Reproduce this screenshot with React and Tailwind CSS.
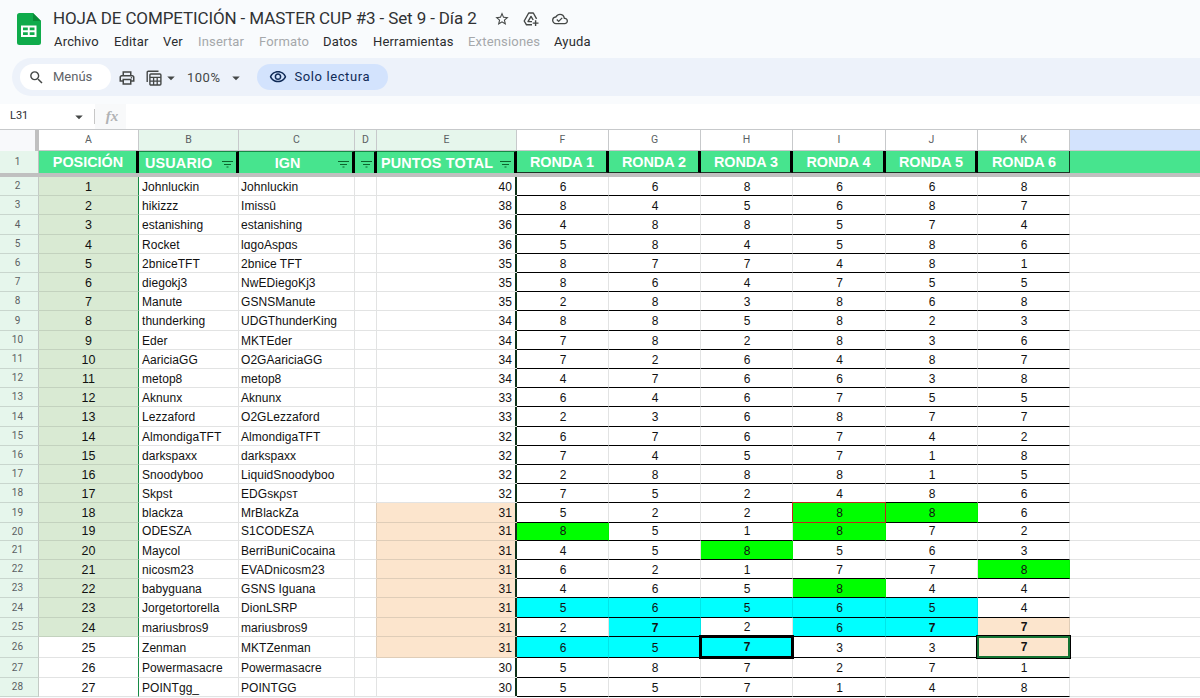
import {
  MdArrowDropDown,
  MdOutlineCloudDone,
  MdOutlinePrint,
  MdOutlineVisibility,
  MdSearch,
  MdStarBorder,
} from "react-icons/md";
import clsx from "clsx";

const MENUS = [
  { label: "Archivo", width: "w-[60px]" },
  { label: "Editar", width: "w-[49px]" },
  { label: "Ver", width: "w-[35px]" },
  { label: "Insertar", width: "w-[61px]", disabled: true },
  { label: "Formato", width: "w-[64px]", disabled: true },
  { label: "Datos", width: "w-[50px]" },
  { label: "Herramientas", width: "w-[95px]" },
  { label: "Extensiones", width: "w-[86px]", disabled: true },
  { label: "Ayuda", width: "w-[60px]" },
];

const COLUMNS = [
  { id: "A", title: "POSICIÓN" },
  { id: "B", title: "USUARIO", filter: true },
  { id: "C", title: "IGN", filter: true },
  { id: "D", title: "", filter: true },
  { id: "E", title: "PUNTOS TOTAL", filter: true },
  { id: "F", title: "RONDA 1" },
  { id: "G", title: "RONDA 2" },
  { id: "H", title: "RONDA 3" },
  { id: "I", title: "RONDA 4" },
  { id: "J", title: "RONDA 5" },
  { id: "K", title: "RONDA 6" },
];

const GRID =
  "grid grid-cols-[35px_4px_100px_100px_116px_22px_140px_92px_92px_92px_93px_92px_92px_130px]";

// usuario, ign, puntos, rondas, alto de la fila
const FILAS = [
  ["Johnluckin", "Johnluckin", 40, [6, 6, 8, 6, 6, 8], 19],
  ["hikizzz", "Imissû", 38, [8, 4, 5, 6, 8, 7], 19],
  ["estanishing", "estanishing", 36, [4, 8, 8, 5, 7, 4], 20],
  ["Rocket", "lɑgoAspɑs", 36, [5, 8, 4, 5, 8, 6], 19],
  ["2bniceTFT", "2bnice TFT", 35, [8, 7, 7, 4, 8, 1], 19],
  ["diegokj3", "NwEDiegoKj3", 35, [8, 6, 4, 7, 5, 5], 19],
  ["Manute", "GSNSManute", 35, [2, 8, 3, 8, 6, 8], 19],
  ["thunderking", "UDGThunderKing", 34, [8, 8, 5, 8, 2, 3], 20],
  ["Eder", "MKTEder", 34, [7, 8, 2, 8, 3, 6], 19],
  ["AariciaGG", "O2GAariciaGG", 34, [7, 2, 6, 4, 8, 7], 19],
  ["metop8", "metop8", 34, [4, 7, 6, 6, 3, 8], 19],
  ["Aknunx", "Aknunx", 33, [6, 4, 6, 7, 5, 5], 19],
  ["Lezzaford", "O2GLezzaford", 33, [2, 3, 6, 8, 7, 7], 20],
  ["AlmondigaTFT", "AlmondigaTFT", 32, [6, 7, 6, 7, 4, 2], 19],
  ["darkspaxx", "darkspaxx", 32, [7, 4, 5, 7, 1, 8], 19],
  ["Snoodyboo", "LiquidSnoodyboo", 32, [2, 8, 8, 8, 1, 5], 19],
  ["Skpst", "EDGsκρsт", 32, [7, 5, 2, 4, 8, 6], 19],
  ["blackza", "MrBlackZa", 31, [5, 2, 2, 8, 8, 6], 20],
  ["ODESZA", "S1CODESZA", 31, [8, 5, 1, 8, 7, 2], 18],
  ["Maycol", "BerriBuniCocaina", 31, [4, 5, 8, 5, 6, 3], 19],
  ["nicosm23", "EVADnicosm23", 31, [6, 2, 1, 7, 7, 8], 19],
  ["babyguana", "GSNS Iguana", 31, [4, 6, 5, 8, 4, 4], 19],
  ["Jorgetortorella", "DionLSRP", 31, [5, 6, 5, 6, 5, 4], 20],
  ["mariusbros9", "mariusbros9", 31, [2, 7, 2, 6, 7, 7], 19],
  ["Zenman", "MKTZenman", 31, [6, 5, 7, 3, 3, 7], 21],
  ["Powermasacre", "Powermasacre", 30, [5, 8, 7, 2, 7, 1], 20],
  ["POINTgg_", "POINTGG", 30, [5, 5, 7, 1, 4, 8], 19],
];

const VERDE = "bg-[#00ff00] border-r-[#00f000]";
const CIAN = "bg-[#00ffff] border-r-[#00e6e8]";
const CREMA = "bg-[#fce5cd] border-r-[#dfcdb8]";

// Celdas resaltadas, por columna y número de fila de la hoja
const COLORES = {
  I19: VERDE, J19: VERDE, F20: VERDE, I20: VERDE, H21: VERDE, K22: VERDE, I23: VERDE,
  F24: CIAN, G24: CIAN, H24: CIAN, I24: CIAN, J24: CIAN,
  G25: CIAN, I25: CIAN, J25: CIAN, K25: CREMA,
  F26: CIAN, G26: CIAN, H26: CIAN, K26: CREMA,
};

const NEGRITA = ["G25", "J25", "K25", "H26", "K26"];

// Celdas con alineación vertical al medio
const AL_MEDIO = ["H25", "K25", "H26", "K26"];

const MARCOS = {
  I19: "-left-px -top-px -right-px -bottom-px border border-[#c0281c]",
  H26: "-left-[2px] -top-[2px] -right-[2px] -bottom-[2px] border-3 border-black",
  K26: "-left-[2px] -top-[2px] -right-[2px] -bottom-[2px] border border-black",
};

function SheetsLogo() {
  return (
    <svg className="h-[32px] w-[24px]" viewBox="0 0 24 32">
      <path d="M2.500 0H16l8 8v21.500a2.500 2.500 0 0 1-2.500 2.500h-19A2.500 2.500 0 0 1 0 29.500v-27A2.500 2.500 0 0 1 2.500 0Z" fill="#0fab4b" />
      <path d="M16 0l8 8h-8Z" fill="#0a8a38" />
      <path d="M4 12.500h15.500v11.500H4Zm2 2v2.700h4.800v-2.700Zm6.700 0v2.700h4.800v-2.700Zm-6.700 4.700v2.700h4.800v-2.700Zm6.700 0v2.700h4.800v-2.700Z" fill="#fff" fillRule="evenodd" />
    </svg>
  );
}

function AddToDriveIcon() {
  return (
    <svg className="h-4 w-4" viewBox="0 0 16 16" fill="none" stroke="#444746" strokeWidth="1.400" strokeLinejoin="round">
      <path d="M9 13.800H3.500L1.200 10 5.700 2H10.300L13.600 7.800" />
      <path d="M9 10.600H5L8 5.400L10.200 9" />
      <path d="M12.600 9.200V15M9.700 12.100H15.500" />
    </svg>
  );
}

function TableViewsIcon() {
  return (
    <svg className="h-4 w-4" viewBox="0 0 16 16" fill="none" stroke="#444746" strokeWidth="1.400">
      <path d="M1.200 12V2.200a1 1 0 0 1 1-1h10.300" />
      <rect x="3.900" y="4" width="11" height="11" rx="1" />
      <path d="M3.900 7.300H14.900M3.900 11.200H14.900M7.600 7.500V15M11.200 7.500V15" strokeWidth="1.300" />
    </svg>
  );
}

function FilterIcon() {
  return (
    <svg className="h-[8px] w-[11px]" viewBox="0 0 11 8" stroke="#0d652d" strokeWidth="1">
      <path d="M0 1.500H11M2 4.500H9M4.500 7H6.500" />
    </svg>
  );
}

function Header() {
  return (
    <header className="flex h-[58px] pl-[17px]">
      <div className="pt-[13px]">
        <SheetsLogo />
      </div>
      <div className="ml-3 flex flex-col">
        <div className="flex h-[32px] items-center pt-[5px]">
          <h1 className="w-[441px] whitespace-nowrap text-[17px] tracking-[-0.12px] text-[#303234]">
            HOJA DE COMPETICIÓN - MASTER CUP #3 - Set 9 - Día 2
          </h1>
          <div className="flex gap-[13px] text-[16px] text-[#444746]">
            <MdStarBorder />
            <AddToDriveIcon />
            <MdOutlineCloudDone />
          </div>
        </div>
        <nav className="flex h-[19px] items-center pl-px text-[13px] tracking-[0.18px]">
          {MENUS.map((m) => (
            <span key={m.label} className={clsx(m.width, m.disabled ? "text-[#a5a8ab]" : "text-[#2a2c2e]")}>
              {m.label}
            </span>
          ))}
        </nav>
      </div>
    </header>
  );
}

function Toolbar() {
  return (
    <div className="ml-3 flex h-[38px] items-center rounded-l-full bg-[#edf2fa] pl-2 text-[13px] text-[#444746]">
      <div className="flex h-[26px] w-[91px] items-center rounded-full bg-white pl-[8px]">
        <MdSearch className="text-[17px]" />
        <span className="ml-2 text-[#5f6368]">Menús</span>
      </div>
      <div className="flex h-full items-center pt-[2px]">
        <MdOutlinePrint className="ml-[7px] text-[18px]" />
        <div className="ml-[10px]">
          <TableViewsIcon />
        </div>
        <MdArrowDropDown className="text-[18px]" />
        <span className="ml-[7px] tracking-[0.5px]">100%</span>
        <MdArrowDropDown className="ml-[7px] text-[18px]" />
      </div>
      <div className="ml-[12px] flex h-[26px] w-[131px] items-center rounded-full bg-[#d3e3fd] pl-3 text-[#0f2a57]">
        <MdOutlineVisibility className="text-[18px]" />
        <span className="ml-[7px] tracking-[0.6px]">Solo lectura</span>
      </div>
    </div>
  );
}

function FormulaBar() {
  return (
    <div className="mt-2 flex h-[25px] items-center bg-white">
      <span className="w-[70px] pl-[10px] text-[11px] text-[#2b2d30]">L31</span>
      <MdArrowDropDown className="text-[18px] text-[#444746]" />
      <div className="ml-[6px] h-[15px] w-px bg-[#c7c7c7]" />
      <div className="flex h-full w-[31px] items-center justify-center bg-[#f8f9fa] pl-[3px] font-['Liberation_Serif',serif] text-[15px] font-bold italic text-[#b0b2b4]">
        fx
      </div>
    </div>
  );
}

function ColumnLetters() {
  return (
    <div className={clsx(GRID, "h-[22px] border-t border-[#c7c9cb] text-[10.500px] text-[#5b5f63]")}>
      <div className="bg-[#f8f9fb]" />
      <div className="bg-[#c0c0c0]" />
      {COLUMNS.map((c) => (
        <div
          key={c.id}
          className={clsx(
            "flex items-center justify-center border-r border-b border-[#c7c9cb]",
            "BCDE".includes(c.id) ? "bg-[#e6f6ec]" : "bg-white"
          )}
        >
          {c.id}
        </div>
      ))}
      <div className="border-b border-[#c7c9cb] bg-[#d3e3fd]" />
    </div>
  );
}

function TitleRow() {
  return (
    <div className={clsx(GRID, "h-[22px] leading-none")}>
      <div className="flex items-center justify-center bg-[#e6f6ec] text-[10px] text-[#5b5f63]">1</div>
      <div className="border-r border-r-[#c0c0c0] bg-[#e6f6ec]" />
      {COLUMNS.map((c) => (
        <div
          key={c.id}
          className={clsx(
            "relative flex items-center bg-[#47e48e] font-['Liberation_Sans',Arial,sans-serif] text-[14.400px] leading-[18px] font-bold whitespace-nowrap text-white",
            c.id === "K" ? "border-r border-r-[#123a22]" : "border-r-3 border-r-black",
            c.filter && "border-t border-t-[#168a45]",
            "FGHIJK".includes(c.id) && "border-b border-b-[#1c3325] pt-px pl-px",
            c.id === "B" && "pl-[6px] tracking-[0.15px]",
            c.id === "E" && "pl-[4px] tracking-[0.15px]",
            c.id !== "B" && c.id !== "E" && "justify-center",
            c.id === "A" && "pl-px",
            c.id === "C" && "pr-4"
          )}
        >
          {c.title}
          {c.filter && (
            <span className={clsx("absolute bottom-[5px] leading-none", c.id === "D" ? "right-[2px]" : "right-[3px]")}>
              <FilterIcon />
            </span>
          )}
        </div>
      ))}
      <div className="bg-[#47e48e]" />
    </div>
  );
}

function Fila({ numero, datos }) {
  const [usuario, ign, puntos, rondas, alto] = datos;
  const clasificado = numero <= 25;
  const empate = numero >= 19 && numero <= 26;
  const linea = alto === 19 ? "leading-[15px]" : "leading-[17px]";

  return (
    <div className={clsx(GRID, "text-[12px] tracking-[0.05px] text-[#111]")} style={{ height: alto }}>
      <div className="flex items-center justify-center border-b border-[#c9d6ce] bg-[#e6f6ec] pb-px font-[Roboto,sans-serif] text-[10px] text-[#5b5f63]">
        {numero}
      </div>
      <div className="border-r border-b border-r-[#c3cbc5] border-b-[#c9d6ce] bg-[#e6f6ec]" />
      <div
        className={clsx(
          "flex items-end justify-center border-r border-b border-r-[#168a45] text-[12.500px]",
          clasificado ? "border-b-[#c3d2be] bg-[#d9ead3]" : "border-b-[#e2e3e3]"
        )}
      >
        <span className={linea}>{numero - 1}</span>
      </div>
      <div className="flex items-end border-r border-b border-[#e2e3e3] pl-[3px] whitespace-nowrap">
        <span className={linea}>{usuario}</span>
      </div>
      <div className="flex items-end border-r border-b border-[#e2e3e3] pl-[2px] whitespace-nowrap">
        <span className={linea}>{ign}</span>
      </div>
      <div className={clsx("border-r border-b border-b-[#e2e3e3]", empate ? "border-r-[#dfcdb8]" : "border-r-[#e2e3e3]")} />
      <div
        className={clsx(
          "flex items-end justify-end border-b pr-[5px] shadow-[inset_-2px_0_0_#0c3018]",
          empate ? "border-b-[#dfcdb8] bg-[#fce5cd]" : "border-b-[#e2e3e3]"
        )}
      >
        <span className={linea}>{puntos}</span>
      </div>
      {rondas.map((valor, i) => {
        const celda = "FGHIJK"[i] + numero;
        return (
          <div
            key={celda}
            className={clsx(
              "relative flex items-end justify-center border-r border-b border-b-black pl-px",
              COLORES[celda] || "border-r-[#e2e3e3]",
              NEGRITA.includes(celda) && "font-bold",
              AL_MEDIO.includes(celda) && "pb-px"
            )}
          >
            <span className={linea}>{valor}</span>
            {MARCOS[celda] && (
              <div className={clsx("absolute z-10", MARCOS[celda])}>
                {celda === "K26" && <div className="h-full border-2 border-[#137333]" />}
              </div>
            )}
          </div>
        );
      })}
      <div className="border-b border-[#e2e3e3]" />
    </div>
  );
}

export default function App() {
  return (
    <div className="h-[698px] w-[1200px] overflow-hidden bg-[#f9fbfd] font-[Roboto,sans-serif]">
      <Header />
      <Toolbar />
      <FormulaBar />
      <main className="bg-white">
        <ColumnLetters />
        <TitleRow />
        <div className="h-1 bg-[#c0c0c0]" />
        <div className="font-['Liberation_Sans',Arial,sans-serif]">
          {FILAS.map((datos, i) => (
            <Fila key={i} numero={i + 2} datos={datos} />
          ))}
        </div>
      </main>
    </div>
  );
}
